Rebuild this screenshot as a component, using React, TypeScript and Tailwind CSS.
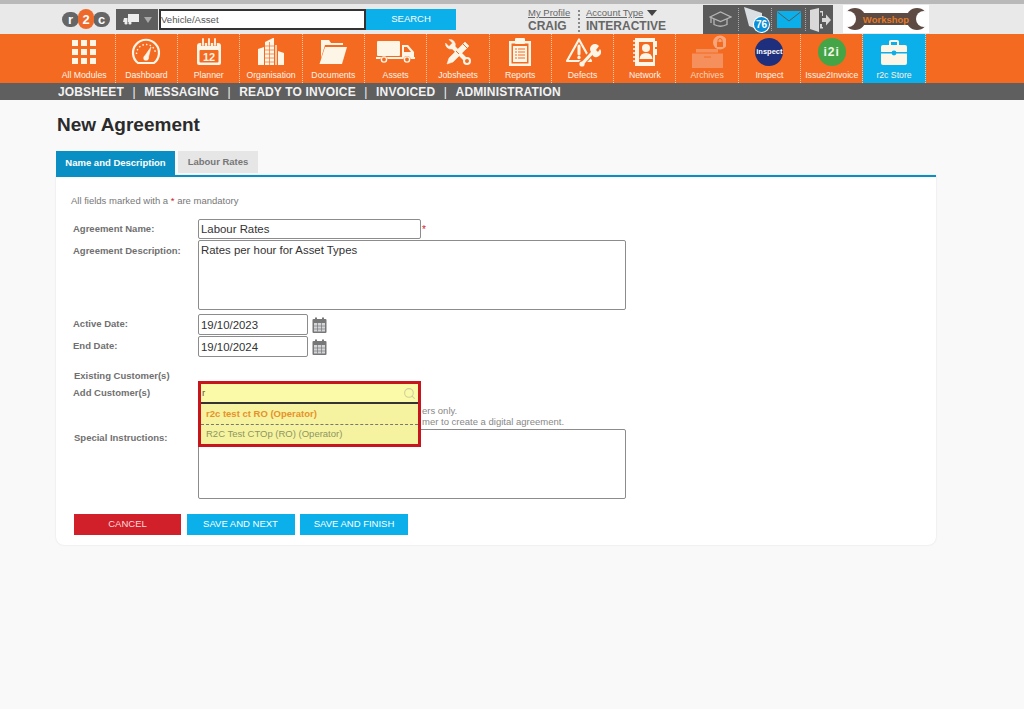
import React from "react";
import { Search } from "lucide-react";

const cream = "#fdf5e6";

const GridIcon = () => (
  <svg width="26" height="26" viewBox="0 0 26 26" fill={cream}>
    <rect x="1" y="1" width="6" height="6" />
    <rect x="10" y="1" width="6" height="6" />
    <rect x="19" y="1" width="6" height="6" />
    <rect x="1" y="10" width="6" height="6" />
    <rect x="10" y="10" width="6" height="6" />
    <rect x="19" y="10" width="6" height="6" />
    <rect x="1" y="19" width="6" height="6" />
    <rect x="10" y="19" width="6" height="6" />
    <rect x="19" y="19" width="6" height="6" />
  </svg>
);

const GaugeIcon = () => (
  <svg width="30" height="30" viewBox="0 0 30 30" fill="none" stroke={cream}>
    <path d="M7 26 A13 13 0 1 1 23 26 Z" strokeWidth="2.2" strokeLinejoin="round" />
    <path d="M5.5 17 A9.5 9.5 0 0 1 24.5 17" strokeWidth="1.4" strokeDasharray="1.5 2.2" />
    <path d="M13 20 L20 10 L17 22 Z" fill={cream} strokeWidth="0.6" />
    <circle cx="15" cy="21" r="2.6" fill={cream} strokeWidth="0" />
  </svg>
);

const PlannerIcon = () => (
  <svg width="30" height="30" viewBox="0 0 30 30" fill="none">
    <path d="M3 9 Q3 6 6 6 H24 Q27 6 27 9 V26 Q27 28 25 28 H5 Q3 28 3 26 Z" fill={cream} />
    <rect x="5.5" y="13" width="19" height="12.5" rx="1" fill="#f46a21" />
    <path d="M9 2 V9 M15 2 V9 M21 2 V9" stroke="#f46a21" strokeWidth="3.6" />
    <path d="M9 2 V8 M15 2 V8 M21 2 V8" stroke={cream} strokeWidth="1.8" strokeLinecap="round" />
    <text x="15" y="23.5" textAnchor="middle" fontSize="11" fontWeight="700" fontFamily="'Liberation Sans', sans-serif" fill={cream}>12</text>
  </svg>
);

const BuildingsIcon = () => (
  <svg width="28" height="30" viewBox="0 0 28 30" fill={cream}>
    <path d="M1 12 L7 10 V28 H1 Z" />
    <path d="M8 5 L16 1 H17 V28 H8 Z" />
    <path d="M18 8 V28 H20 V8 Z" opacity="0.7" />
    <path d="M21 14 L27 16 V28 H21 Z" />
    <path d="M8 9 H17 M8 13 H17 M8 17 H17 M8 21 H17 M8 25 H17 M12.5 5 V28" stroke="#f46a21" strokeWidth="0.7" />
  </svg>
);

const FolderIcon = () => (
  <svg width="30" height="28" viewBox="0 0 30 28" fill={cream}>
    <path d="M3 2 H11 L13 5 H25 V7 H7 L3 20 Z" />
    <path d="M7 9 H29 L24 26 H1.5 Z" />
  </svg>
);

const TruckIcon = () => (
  <svg width="40" height="24" viewBox="0 0 40 24" fill={cream}>
    <rect x="1" y="1" width="23" height="15" rx="1" />
    <path d="M26 5 H32 L38 12 V18 H26 Z M28 7 V12 H35 L31 7 Z" fillRule="evenodd" />
    <rect x="0" y="17" width="39" height="2" />
    <circle cx="8" cy="19.5" r="3.6" fill="#f46a21" />
    <circle cx="8" cy="19.5" r="2.6" fill="none" stroke={cream} strokeWidth="1.4" />
    <circle cx="31" cy="19.5" r="3.6" fill="#f46a21" />
    <circle cx="31" cy="19.5" r="2.6" fill="none" stroke={cream} strokeWidth="1.4" />
  </svg>
);

const ToolsIcon = () => (
  <svg width="28" height="28" viewBox="0 0 28 28" fill="none" stroke={cream}>
    <path d="M7 7 L23 23" strokeWidth="4" />
    <path d="M1.5 5 L5 8.5 L8.5 5 L5 1.5 A5.5 5.5 0 0 1 11 9 L8 11 A5.5 5.5 0 0 1 1.5 5 Z" fill={cream} strokeWidth="0.5" />
    <circle cx="23" cy="23" r="3" strokeWidth="2" fill="#f46a21" />
    <path d="M21 4 L5 20 L3 26 L9 24 L25 8 Z" fill={cream} strokeWidth="0.5" />
    <path d="M19 6 L23 10 M12 13 L15 16" stroke="#f46a21" strokeWidth="1" />
  </svg>
);

const ClipboardIcon = () => (
  <svg width="24" height="30" viewBox="0 0 24 30" fill={cream}>
    <path d="M1 4 H23 V29 H1 Z M3.5 6.5 V26.5 H20.5 V6.5 Z" fillRule="evenodd" />
    <rect x="7" y="1" width="10" height="6" rx="1" />
    <path d="M5 9 H19 V25 H5 Z" />
    <path d="M7 12 H17 M7 15 H17 M7 18 H17 M7 21 H17" stroke="#f46a21" strokeWidth="1.2" strokeDasharray="2 1 8 0" />
  </svg>
);

const DefectIcon = () => (
  <svg width="36" height="30" viewBox="0 0 36 30" fill="none">
    <path d="M14 2.5 L26 24 H2 Z" stroke={cream} strokeWidth="2.2" strokeLinejoin="round" />
    <path d="M14 9 V17" stroke={cream} strokeWidth="3" strokeLinecap="round" />
    <circle cx="14" cy="20.5" r="1.7" fill={cream} />
    <path d="M16 27 L27 16" stroke="#f46a21" strokeWidth="6" />
    <path d="M17 27 L28 15" stroke={cream} strokeWidth="3.2" />
    <path d="M26 15 A5 5 0 0 1 34 9 L31 13 L33 15 L35 12 A5 5 0 0 1 28 19 Z" fill={cream} />
    <circle cx="17" cy="27" r="2.6" fill={cream} />
  </svg>
);

const AddressBookIcon = () => (
  <svg width="26" height="30" viewBox="0 0 26 30" fill={cream}>
    <path d="M3 1 H23 V29 H3 Z M7 5 V25 H21 V5 Z" fillRule="evenodd" />
    <circle cx="14" cy="11" r="4" />
    <path d="M7.5 22 Q8 16 14 16 Q20 16 20.5 22 Z" />
    <path d="M1 4 H5 M1 8 H5 M1 12 H5 M1 16 H5 M1 20 H5 M1 24 H5" stroke={cream} strokeWidth="1.5" />
    <path d="M23 4 H25 V10 H23 Z M23 12 H25 V18 H23 Z" />
  </svg>
);

const ArchiveIcon = () => (
  <svg width="38" height="34" viewBox="-3 0 38 34" fill="#f58f5c">
    <path d="M5 14 H27 V18 H32 V33 H1 V18 H5 Z" />
    <path d="M1 18 H32" stroke="#f46a21" strokeWidth="1" />
    <path d="M13 22 H20" stroke="#f46a21" strokeWidth="1" />
    <circle cx="29" cy="7.5" r="7" fill="#f7a57a" />
    <rect x="26" y="7" width="6" height="5" fill="#f46a21" />
    <path d="M27 7 V5.5 A2 2 0 0 1 31 5.5 V7" fill="none" stroke="#f46a21" strokeWidth="1" />
  </svg>
);

const InspectIcon = () => (
  <div className="flex h-[28px] w-[28px] items-center justify-center rounded-full bg-[#1e2f7d] text-[7.5px] font-bold text-white">
    inspect
  </div>
);

const I2iIcon = () => (
  <div className="flex h-[28px] w-[28px] items-center justify-center rounded-full bg-[#43a546] text-[12px] font-bold tracking-[1px] text-[#f4f4e8]">
    i2i
  </div>
);

const BriefcaseIcon = () => (
  <svg width="28" height="28" viewBox="0 0 28 28" fill={cream}>
    <path d="M9 7 V3.5 Q9 2 11 2 H17 Q19 2 19 3.5 V7 H17 V4 H11 V7 Z" />
    <path d="M1 9 Q1 7 3 7 H25 Q27 7 27 9 V14 H1 Z" />
    <path d="M1 15.5 H27 V25 Q27 27 25 27 H3 Q1 27 1 25 Z" />
    <circle cx="14" cy="15" r="2.4" fill="#0bafea" />
  </svg>
);

const modules = [
  { label: "All Modules", icon: <GridIcon /> },
  { label: "Dashboard", icon: <GaugeIcon /> },
  { label: "Planner", icon: <PlannerIcon /> },
  { label: "Organisation", icon: <BuildingsIcon /> },
  { label: "Documents", icon: <FolderIcon /> },
  { label: "Assets", icon: <TruckIcon /> },
  { label: "Jobsheets", icon: <ToolsIcon /> },
  { label: "Reports", icon: <ClipboardIcon /> },
  { label: "Defects", icon: <DefectIcon /> },
  { label: "Network", icon: <AddressBookIcon /> },
  { label: "Archives", icon: <ArchiveIcon /> },
  { label: "Inspect", icon: <InspectIcon /> },
  { label: "Issue2Invoice", icon: <I2iIcon /> },
  { label: "r2c Store", icon: <BriefcaseIcon /> },
];

const subNav = ["JOBSHEET", "MESSAGING", "READY TO INVOICE", "INVOICED", "ADMINISTRATION"];

const CalendarIcon = () => (
  <svg width="15" height="16" viewBox="0 0 15 16" className="ml-[4px] shrink-0">
    <rect x="0.5" y="2" width="14" height="14" rx="1" fill="#777" />
    <rect x="3" y="0.5" width="2" height="3" fill="#777" />
    <rect x="10" y="0.5" width="2" height="3" fill="#777" />
    <rect x="2" y="6" width="11" height="8.5" fill="#d3d6d8" />
    <path d="M2 9 H13 M2 12 H13 M5.5 6 V14.5 M9.5 6 V14.5" stroke="#777" strokeWidth="0.7" />
  </svg>
);

const labelCls = "w-[127px] shrink-0 pl-[2px] text-[9.5px] font-bold text-[#707070]";
const inputCls = "rounded-[2px] border border-[#8c8c8c] bg-white px-[2px] text-[11.4px] text-[#333] outline-none";

const App = () => {
  return (
    <div className="min-h-[709px] bg-[#f9f9f9] font-['Liberation_Sans',Arial,sans-serif]">
      <div className="h-[4px] bg-[#b9b9b9]" />

      {/* TOP BAR */}
      <div className="flex h-[30px] items-start bg-[#e9e9e9] pl-[62px]">
        <div className="mt-[5px] flex h-[20px] w-[48px] items-center text-[13px] font-bold leading-none text-white">
          <span className="flex h-[15px] w-[17px] items-center justify-center rounded-full bg-[#666]">r</span>
          <span className="-mx-[1px] z-[1] flex h-[20px] w-[16px] items-center justify-center rounded-full bg-[#ee6a2a]">2</span>
          <span className="flex h-[15px] w-[17px] items-center justify-center rounded-full bg-[#666]">c</span>
        </div>

        <div className="ml-[6px] mt-[5px] flex h-[21px] w-[42px] items-center justify-center gap-[5px] bg-[#5e5e5e]">
          <svg width="16" height="11" viewBox="0 0 16 11" fill="#eee">
            <rect x="5" y="0" width="11" height="8" />
            <path d="M1 4 H4.5 V8 H0 Z" />
            <circle cx="3" cy="9" r="1.6" />
            <circle cx="7" cy="9" r="1.6" />
          </svg>
          <span className="h-0 w-0 border-x-[4px] border-t-[6px] border-x-transparent border-t-[#a9a9a9]" />
        </div>

        <input
          readOnly
          value="Vehicle/Asset"
          className="ml-[1px] mt-[5px] h-[21px] w-[207px] border-2 border-[#333] bg-white px-0 text-[9.6px] text-[#555] outline-none"
        />
        <div className="mt-[5px] flex h-[21px] w-[90px] items-center justify-center bg-[#0bafea] text-[9.5px] text-white">
          SEARCH
        </div>

        <div className="ml-[72px] mt-[3px] w-[50px] shrink-0 text-[#666]">
          <div className="text-[9.5px] leading-[12px] underline">My Profile</div>
          <div className="text-[12px] font-bold leading-[15px]">CRAIG</div>
        </div>
        <div className="mt-[6px] h-[22px] border-l-2 border-dotted border-[#888]" />
        <div className="ml-[6px] mt-[3px] w-[117px] shrink-0 text-[#666]">
          <div className="flex items-center gap-[4px] text-[9.5px] leading-[12px]">
            <span className="underline">Account Type</span>
            <span className="h-0 w-0 border-x-[5px] border-t-[6px] border-x-transparent border-t-[#444]" />
          </div>
          <div className="text-[12px] font-bold leading-[15px]">INTERACTIVE</div>
        </div>

        <div className="mt-[1px] flex h-[29px] w-[130px] items-center bg-[#5a5a5a]">
          <div className="flex w-[36px] justify-center border-r border-dotted border-[#aaa] py-[3px]">
            <svg width="23" height="17" viewBox="0 0 23 17" fill="none" stroke="#b5b5b5" strokeWidth="1.3">
              <path d="M1 6 L11.5 1 L22 6 L11.5 10.5 Z" />
              <path d="M5 8 V13.5 Q11.5 17 18 13.5 V8" />
              <path d="M2 6.5 V12" />
            </svg>
          </div>
          <div className="relative flex w-[32px] justify-center">
            <svg width="24" height="27" viewBox="0 0 24 27">
              <path d="M1 1 L19 7 V25 L6 20 Z" fill="#d9dfe3" />
            </svg>
            <span className="absolute bottom-[1px] right-[2px] flex h-[15px] w-[15px] items-center justify-center rounded-full bg-[#0b8fd8] text-[10px] font-bold text-white ring-1 ring-white">
              76
            </span>
          </div>
          <div className="flex w-[35px] justify-center border-x border-dotted border-[#aaa] py-[3px]">
            <svg width="24" height="17" viewBox="0 0 24 17">
              <rect width="24" height="17" fill="#0bafea" />
              <path d="M0.5 1 L12 10 L23.5 1" fill="none" stroke="#5a5a5a" strokeWidth="1" />
            </svg>
          </div>
          <div className="flex flex-1 justify-center">
            <svg width="25" height="24" viewBox="0 0 25 24" fill="#d9d9d9">
              <path d="M3 2 L12 0 V24 L3 21 Z" />
              <path d="M13 3 H16 V8 H15 V4.5 H13 Z M13 16 H15 V19 H16 V20.5 H13 Z" />
              <path d="M15 10 H19 V6.5 L24 12 L19 17.5 V14 H15 Z" />
            </svg>
          </div>
        </div>

        <div className="ml-[10px] mt-[1px] h-[28px] w-[86px] bg-white">
          <svg width="86" height="28" viewBox="0 0 86 28">
            <circle cx="12" cy="14" r="11" fill="#5d4a42" />
            <circle cx="5" cy="14" r="8" fill="#fff" />
            <circle cx="74" cy="14" r="11" fill="#5d4a42" />
            <circle cx="81" cy="14" r="8" fill="#fff" />
            <rect x="20" y="8" width="46" height="12" fill="#5d4a42" />
            <text x="43" y="17.5" textAnchor="middle" fontSize="9.5" fontWeight="700" fontFamily="'Liberation Sans', sans-serif" fill="#e07b2a">Workshop</text>
          </svg>
        </div>
      </div>

      {/* MODULE NAV */}
      <div className="flex h-[49px] bg-[#f46a21] pl-[53.5px]">
        {modules.map((m) => (
          <div
            key={m.label}
            className={`flex w-[62.3px] flex-col items-center border-r border-dotted border-[#f6c8a6] ${
              m.label === "r2c Store" ? "bg-[#0bafea]" : ""
            } ${m.label === "Archives" ? "text-[#fbd5bd]" : "text-[#fff3e6]"}`}
          >
            <div className="flex h-[34px] items-center justify-center pt-[2px]">{m.icon}</div>
            <div className="mt-[2px] whitespace-nowrap text-[8.7px] leading-[11px]">{m.label}</div>
          </div>
        ))}
      </div>

      {/* SUB NAV */}
      <div className="flex h-[17px] items-center bg-[#5f5f5f] pl-[58px] text-[12px] font-bold tracking-[0.15px] text-[#f2f2f2]">
        {subNav.map((item, i) => (
          <React.Fragment key={item}>
            {i > 0 && <span className="mx-[8.5px] font-normal">|</span>}
            <span>{item}</span>
          </React.Fragment>
        ))}
      </div>

      {/* CONTENT */}
      <div className="pl-[56px]">
        <h1 className="pl-[1px] pt-[14px] text-[19px] font-bold leading-[21px] text-[#2b2b2b]">New Agreement</h1>

        {/* TABS */}
        <div className="mt-[16px] flex h-[24px] w-[880px] items-start gap-[3px]">
          <div className="flex h-[24px] w-[119px] items-center justify-center bg-[#0a8fc4] text-[9.5px] font-bold text-white">
            Name and Description
          </div>
          <div className="flex h-[22px] w-[80px] items-center justify-center bg-[#e6e6e6] text-[9.5px] font-bold text-[#777]">
            Labour Rates
          </div>
        </div>

        {/* CARD */}
        <div className="w-[880px] rounded-b-[8px] border-t-2 border-[#0a8fc4] bg-white px-[15px] pb-[10px] pt-[18px] shadow-[0_0_2px_rgba(0,0,0,0.12)]">
          <p className="text-[9.5px] leading-[12px] text-[#777]">
            All fields marked with a <span className="text-[#d0202a]">*</span> are mandatory
          </p>

          <div className="mt-[12px] flex h-[20px] items-center">
            <label className={labelCls}>Agreement Name:</label>
            <input readOnly value="Labour Rates" className={`${inputCls} h-[20px] w-[223px]`} />
            <span className="ml-[1px] text-[10px] text-[#d0202a]">*</span>
          </div>

          <div className="mt-[1px] flex items-start">
            <label className={`${labelCls} pt-[4px]`}>Agreement Description:</label>
            <textarea
              readOnly
              value="Rates per hour for Asset Types"
              className={`${inputCls} block h-[70px] w-[428px] resize-none py-[1px]`}
            />
          </div>

          <div className="mt-[4px] flex h-[21px] items-center">
            <label className={labelCls}>Active Date:</label>
            <input readOnly value="19/10/2023" className={`${inputCls} h-[21px] w-[110px]`} />
            <CalendarIcon />
          </div>
          <div className="mt-[1px] flex h-[21px] items-center">
            <label className={labelCls}>End Date:</label>
            <input readOnly value="19/10/2024" className={`${inputCls} h-[21px] w-[110px]`} />
            <CalendarIcon />
          </div>

          <div className="mt-[13px] h-[11px] pl-[3px] text-[9.5px] font-bold leading-[11px] text-[#707070]">
            Existing Customer(s)
          </div>

          <div className="relative h-[24px]">
            <label className={`${labelCls} absolute left-0 top-[5px]`}>Add Customer(s)</label>
            {/* customer lookup, open over the hint text and the next field */}
            <div className="absolute left-[127px] top-0 z-10 w-[223px] border-[3px] border-[#c8141c] bg-[#f5f3a0]">
              <div className="flex h-[20px] items-center justify-between border-b-2 border-[#333] bg-[#fbfaa8] pl-[1px] pr-[2px] text-[9.5px] text-[#555]">
                <span>r</span>
                <Search size={13} color="#cfcf9a" strokeWidth={2} />
              </div>
              <div className="flex h-[21px] items-center border-b border-dashed border-[#777] pl-[5px] text-[9.5px] font-bold text-[#e8912a]">
                r2c test ct RO (Operator)
              </div>
              <div className="flex h-[19px] items-center pl-[5px] text-[9.5px] text-[#8f9560]">
                R2C Test CTOp (RO) (Operator)
              </div>
            </div>
          </div>

          <div className="pl-[351px] text-[9.5px] leading-[11px] text-[#888]">
            <div>ers only.</div>
            <div>mer to create a digital agreement.</div>
          </div>

          <div className="mt-[2px] flex items-start">
            <label className={`${labelCls} pl-[3px] pt-[2px]`}>Special Instructions:</label>
            <textarea readOnly value="" className={`${inputCls} block h-[70px] w-[428px] resize-none`} />
          </div>

          <div className="mt-[15px] flex gap-[5.5px] pl-[3px]">
            <button className="h-[21px] w-[107px] bg-[#d2202a] text-[9.5px] text-[#f8dcdc]">CANCEL</button>
            <button className="h-[21px] w-[108px] bg-[#0bafea] text-[9.5px] text-white">SAVE AND NEXT</button>
            <button className="h-[21px] w-[108px] bg-[#0bafea] text-[9.5px] text-white">SAVE AND FINISH</button>
          </div>
        </div>
      </div>
    </div>
  );
};

export default App;
